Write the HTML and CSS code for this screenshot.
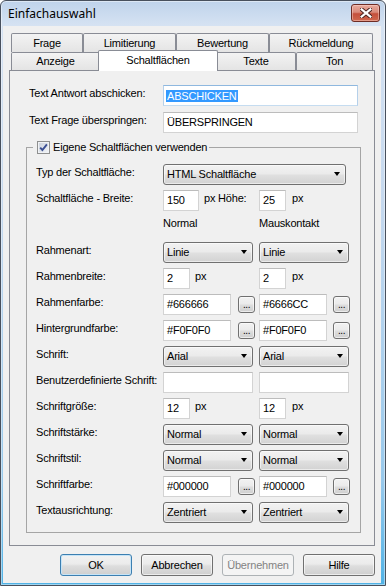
FILE: index.html
```html
<!DOCTYPE html>
<html>
<head>
<meta charset="utf-8">
<title>Einfachauswahl</title>
<link rel="stylesheet" href="styles.css">
</head>
<body>
<div class="window">
  <div class="titlebar">
    <span class="title">Einfachauswahl</span>
    <div class="close">
      <svg width="12" height="10" viewBox="0 0 12 10">
        <path d="M1.6 1.4 L10.4 8.6 M10.4 1.4 L1.6 8.6" stroke="#4b2420" stroke-width="4.2" stroke-linecap="square"/>
        <path d="M1.6 1.4 L10.4 8.6 M10.4 1.4 L1.6 8.6" stroke="#ffffff" stroke-width="2.2" stroke-linecap="square"/>
      </svg>
    </div>
  </div>
  <div class="client">
    <div class="tabs">
      <div class="tabrow back">
        <div class="tab t-frage">Frage</div>
        <div class="tab t-limit">Limitierung</div>
        <div class="tab t-bew">Bewertung</div>
        <div class="tab t-rueck">Rückmeldung</div>
      </div>
      <div class="tabrow front">
        <div class="tab t-anz">Anzeige</div>
        <div class="tab t-schalt selected">Schaltflächen</div>
        <div class="tab t-texte">Texte</div>
        <div class="tab t-ton">Ton</div>
      </div>
    </div>
    <div class="panel">
      <div class="textrows">
        <div class="lbl">Text Antwort abschicken:</div>
        <div class="input wide focus"><span class="sel">ABSCHICKEN</span></div>
        <div class="lbl">Text Frage überspringen:</div>
        <div class="input wide">ÜBERSPRINGEN</div>
      </div>
      <fieldset class="group">
        <legend class="legend">
          <span class="checkbox">
            <svg width="11" height="11" viewBox="0 0 11 11">
              <path d="M2.2 5.6 L4.4 8 L8.9 2.4" fill="none" stroke="#3b4f93" stroke-width="1.9"/>
            </svg>
          </span>
          <span>Eigene Schaltflächen verwenden</span>
        </legend>
        <div class="grid">
          <div class="lbl">Typ der Schaltfläche:</div>
          <div class="cell span2"><div class="combo c-typ"><span>HTML Schaltfläche</span><i class="arrow"></i></div></div>

          <div class="lbl">Schaltfläche - Breite:</div>
          <div class="cell"><div class="input i-150">150</div><span class="unit">px Höhe:</span></div>
          <div class="cell"><div class="input i-small">25</div><span class="unit u-b">px</span></div>

          <div class="lbl"></div>
          <div class="cell"><span class="head">Normal</span></div>
          <div class="cell"><span class="head">Mauskontakt</span></div>

          <div class="lbl">Rahmenart:</div>
          <div class="cell"><div class="combo"><span>Linie</span><i class="arrow"></i></div></div>
          <div class="cell"><div class="combo"><span>Linie</span><i class="arrow"></i></div></div>

          <div class="lbl">Rahmenbreite:</div>
          <div class="cell"><div class="input i-small">2</div><span class="unit">px</span></div>
          <div class="cell"><div class="input i-small">2</div><span class="unit u-b">px</span></div>

          <div class="lbl">Rahmenfarbe:</div>
          <div class="cell"><div class="input i-color">#666666</div><div class="dots dots-a">...</div></div>
          <div class="cell"><div class="input i-color">#6666CC</div><div class="dots">...</div></div>

          <div class="lbl">Hintergrundfarbe:</div>
          <div class="cell"><div class="input i-color">#F0F0F0</div><div class="dots dots-a">...</div></div>
          <div class="cell"><div class="input i-color">#F0F0F0</div><div class="dots">...</div></div>

          <div class="lbl">Schrift:</div>
          <div class="cell"><div class="combo"><span>Arial</span><i class="arrow"></i></div></div>
          <div class="cell"><div class="combo"><span>Arial</span><i class="arrow"></i></div></div>

          <div class="lbl">Benutzerdefinierte Schrift:</div>
          <div class="cell"><div class="input i-font"></div></div>
          <div class="cell"><div class="input i-font"></div></div>

          <div class="lbl">Schriftgröße:</div>
          <div class="cell"><div class="input i-small">12</div><span class="unit">px</span></div>
          <div class="cell"><div class="input i-small">12</div><span class="unit u-b">px</span></div>

          <div class="lbl">Schriftstärke:</div>
          <div class="cell"><div class="combo"><span>Normal</span><i class="arrow"></i></div></div>
          <div class="cell"><div class="combo"><span>Normal</span><i class="arrow"></i></div></div>

          <div class="lbl">Schriftstil:</div>
          <div class="cell"><div class="combo"><span>Normal</span><i class="arrow"></i></div></div>
          <div class="cell"><div class="combo"><span>Normal</span><i class="arrow"></i></div></div>

          <div class="lbl">Schriftfarbe:</div>
          <div class="cell"><div class="input i-color">#000000</div><div class="dots dots-a">...</div></div>
          <div class="cell"><div class="input i-color">#000000</div><div class="dots">...</div></div>

          <div class="lbl">Textausrichtung:</div>
          <div class="cell"><div class="combo"><span>Zentriert</span><i class="arrow"></i></div></div>
          <div class="cell"><div class="combo"><span>Zentriert</span><i class="arrow"></i></div></div>
        </div>
      </fieldset>
    </div>
    <div class="buttons">
      <div class="btn default">OK</div>
      <div class="btn">Abbrechen</div>
      <div class="btn disabled">Übernehmen</div>
      <div class="btn">Hilfe</div>
    </div>
  </div>
</div>
</body>
</html>
```

FILE: styles.css
```css
* { box-sizing: border-box; }
html, body { margin: 0; padding: 0; background: #ffffff; }
body {
  width: 386px;
  height: 586px;
  overflow: hidden;
  font-family: "Liberation Sans", Arial, sans-serif;
  font-size: 11px;
  line-height: 13px;
  letter-spacing: -0.2px;
  color: #000;
}

.window {
  width: 386px;
  height: 586px;
  display: flex;
  flex-direction: column;
  border: 1px solid #48505d;
  border-radius: 6px 6px 0 0;
  padding: 0 4px 2px 2px;
  background: linear-gradient(#bfd3eb 0, #d5e2f2 24px, #c6d9ef 200px, #98c9ec 480px, #4fb2e6 586px);
  box-shadow: inset 0 0 0 1px rgba(255, 255, 255, 0.45);
}

.titlebar {
  height: 25px;
  flex: none;
  display: flex;
  align-items: flex-start;
}
.title {
  font-family: "Noto Sans", "Open Sans", sans-serif;
  font-size: 12px;
  line-height: 16px;
  letter-spacing: 0;
  margin: 5px 0 0 5px;
  color: #000;
}
.close {
  margin: 3px 1px 0 auto;
  width: 29px;
  height: 18px;
  border: 1px solid #6e2c24;
  border-radius: 3px;
  background: linear-gradient(#e8aa9d 0, #d98a7a 45%, #c44f3b 55%, #d0684f 100%);
  box-shadow: inset 0 0 0 1px rgba(255, 220, 210, 0.45);
  display: flex;
  align-items: center;
  justify-content: center;
}

.client {
  flex: 1;
  background: #f0f0f0;
  padding: 7px 6px 7px 6px;
  display: flex;
  flex-direction: column;
}

/* Tabs */
.tabs { margin: 0 2px; flex: none; }
.tabrow { display: flex; }
.tabrow.back { height: 19px; }
.tabrow.front { height: 18px; }
.tab {
  border: 1px solid #898c95;
  border-bottom: 0;
  border-radius: 2px 2px 0 0;
  background: linear-gradient(#f3f3f3, #e4e4e4);
  display: flex;
  align-items: center;
  justify-content: center;
  flex: none;
}
.t-frage { width: 72px; }
.t-limit { width: 93px; }
.t-bew { width: 93px; }
.t-rueck { width: 104px; }
.t-anz { width: 89px; }
.t-schalt { width: 116px; }
.t-texte { width: 80px; }
.t-ton { width: 77px; }
.tab.selected {
  position: relative;
  z-index: 2;
  width: 120px;
  height: 21px;
  margin: -2px -2px -1px;
  background: #ffffff;
  padding-bottom: 1px;
}

.panel {
  flex: 1;
  border: 1px solid #898c95;
  background: #f0f0f0;
  padding: 14px 0 0 16px;
}

.lbl { padding-top: 2px; white-space: nowrap; }

.textrows {
  margin-left: 3px;
  display: grid;
  grid-template-columns: 134px 195px;
  grid-auto-rows: 21px;
  row-gap: 6px;
}

.input {
  height: 21px;
  background: #ffffff;
  border: 1px solid #d3d3d3;
  border-top-color: #bcbcbc;
  padding: 0 3px;
  display: flex;
  align-items: center;
  white-space: nowrap;
}
.input.wide { width: 195px; }
.input.focus { border-color: #8fb8df #b5d0ea #c5dcf0 #b5d0ea; padding-left: 2px; }
.sel { background: #3399ff; color: #ffffff; padding: 0 1px; line-height: 12px; }
.i-150 { width: 36px; }
.i-small { width: 27px; }
.i-color { width: 68px; }
.i-font { width: 90px; }

.group {
  margin: 7px 0 0 0;
  padding: 0;
  width: 335px;
  border: 1px solid #a5a5a5;
  min-inline-size: 0;
}
.legend {
  margin-left: 6px;
  padding: 0 2px 0 4px;
  height: 15px;
  display: flex;
  align-items: center;
  gap: 3px;
}
.checkbox {
  width: 13px;
  height: 13px;
  border: 1px solid #8e8f8f;
  background: linear-gradient(135deg, #c9d0db, #f4f6f9);
  box-shadow: inset 0 0 0 1px #f0f2f5;
  display: flex;
  align-items: center;
  justify-content: center;
}

.grid {
  padding: 9px 0 9px 9px;
  display: grid;
  grid-template-columns: 127px 96px 103px;
  grid-auto-rows: 21px;
  row-gap: 5px;
}
.cell { display: flex; align-items: center; }
.span2 { grid-column: span 2; }
.unit { align-self: flex-start; padding-top: 2px; margin-left: 5px; }
.u-b { margin-left: 6px; }
.head { align-self: flex-start; padding-top: 1px; }

.combo {
  width: 90px;
  height: 21px;
  border: 1px solid #707070;
  border-radius: 3px;
  background: linear-gradient(#f2f2f2 0, #ebebeb 45%, #dfdfdf 55%, #d2d2d2 100%);
  box-shadow: inset 0 0 0 1px rgba(255, 255, 255, 0.55);
  display: flex;
  align-items: center;
  justify-content: space-between;
  padding: 0 5px 0 3px;
  white-space: nowrap;
}
.combo.c-typ { width: 183px; }
.arrow {
  width: 0;
  height: 0;
  border-left: 3.5px solid transparent;
  border-right: 3.5px solid transparent;
  border-top: 4px solid #000;
  margin-top: -1px;
}

.dots {
  width: 17px;
  height: 17px;
  margin-left: 6px;
  border: 1px solid #707070;
  border-radius: 3px;
  background: linear-gradient(#f2f2f2 0, #ebebeb 45%, #dddddd 55%, #cfcfcf 100%);
  box-shadow: inset 0 0 0 1px rgba(255, 255, 255, 0.6);
  display: flex;
  justify-content: center;
  align-items: flex-end;
  line-height: 13px;
  padding-bottom: 1px;
  font-size: 10px;
  letter-spacing: -0.5px;
}
.dots-a { margin-left: 7px; }

.buttons {
  flex: none;
  margin-top: 8px;
  height: 22px;
  display: flex;
  justify-content: flex-end;
  gap: 9px;
}
.btn {
  width: 72px;
  height: 22px;
  border: 1px solid #707070;
  border-radius: 3px;
  background: linear-gradient(#f2f2f2 0, #ebebeb 45%, #dddddd 55%, #cfcfcf 100%);
  box-shadow: inset 0 0 0 1px rgba(255, 255, 255, 0.6);
  display: flex;
  align-items: center;
  justify-content: center;
}
.btn.default {
  border-color: #3c7fb1;
  box-shadow: inset 0 0 0 1px #c6e4f7;
}
.btn.disabled {
  border-color: #adb2b5;
  background: #f4f4f4;
  box-shadow: none;
  color: #838383;
}
```
